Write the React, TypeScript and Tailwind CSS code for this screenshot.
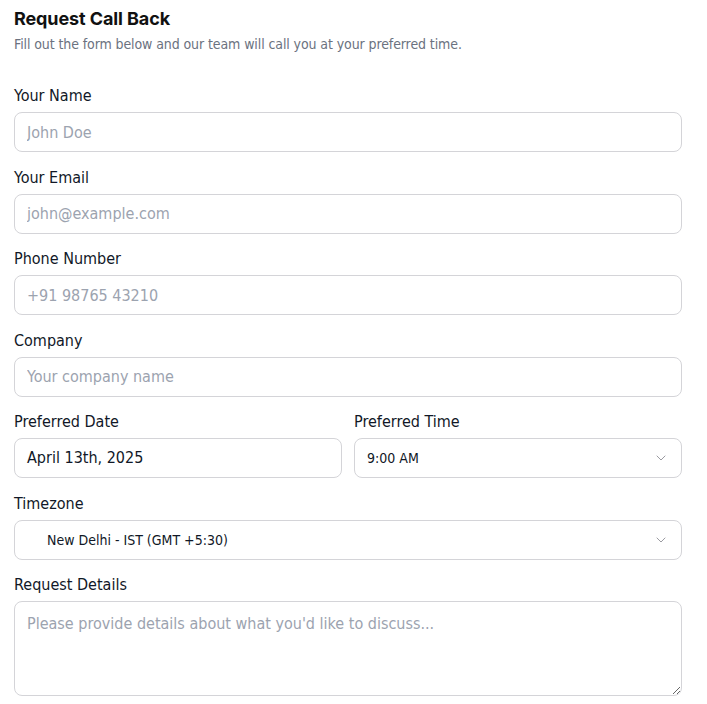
import { ChevronDown } from 'lucide-react'

const body = "font-['DejaVu_Sans_Condensed','DejaVu_Sans',sans-serif]"

function Field({ label, children }: { label: string; children: React.ReactNode }) {
  return (
    <div className="flex flex-col">
      <label className="text-base leading-6 text-[#111827] mb-1">{label}</label>
      {children}
    </div>
  )
}

function TextInput({ placeholder }: { placeholder: string }) {
  return (
    <input
      type="text"
      placeholder={placeholder}
      className="h-10 w-full rounded-lg border border-[#d4d4d8] bg-white px-3 text-base text-[#111827] placeholder:text-[#9ca3af] outline-none"
    />
  )
}

function SelectBox({ value, indent }: { value: string; indent?: boolean }) {
  return (
    <div className={`flex h-10 w-full items-center justify-between rounded-lg border border-[#d4d4d8] bg-white pr-3 ${indent ? 'pl-8' : 'pl-3'}`}>
      <span className="text-sm text-[#111827]">{value}</span>
      <ChevronDown className="h-4 w-4 text-[#71717a] opacity-70" strokeWidth={1.5} />
    </div>
  )
}

export default function App() {
  return (
    <div className={`min-h-screen bg-white px-[14px] pt-[7px] ${body}`}>
      <div className="w-[668px]">
        <h2 className="text-lg leading-6 font-bold text-[#111] font-['Inter',sans-serif] tracking-[-0.1px]">Request Call Back</h2>
        <p className="mt-[3px] text-sm leading-5 text-[#6b7280] tracking-[-0.1px]">
          Fill out the form below and our team will call you at your preferred time.
        </p>

        <form className="mt-[30px] flex flex-col gap-[13.5px]">
          <Field label="Your Name">
            <TextInput placeholder="John Doe" />
          </Field>
          <Field label="Your Email">
            <TextInput placeholder="john@example.com" />
          </Field>
          <Field label="Phone Number">
            <TextInput placeholder="+91 98765 43210" />
          </Field>
          <Field label="Company">
            <TextInput placeholder="Your company name" />
          </Field>
          <div className="grid grid-cols-2 gap-3">
            <Field label="Preferred Date">
              <button type="button" className="flex h-10 w-full items-center rounded-lg border border-[#d4d4d8] bg-white px-3 text-left text-base text-[#111827]">
                April 13th, 2025
              </button>
            </Field>
            <Field label="Preferred Time">
              <SelectBox value="9:00 AM" />
            </Field>
          </div>
          <Field label="Timezone">
            <SelectBox value="New Delhi - IST (GMT +5:30)" indent />
          </Field>
          <Field label="Request Details">
            <textarea
              placeholder="Please provide details about what you'd like to discuss..."
              className="h-[95px] w-full rounded-lg border border-[#d4d4d8] bg-white px-3 pt-[10px] pb-2 text-base text-[#111827] placeholder:text-[#9ca3af] outline-none"
            />
          </Field>
        </form>
      </div>
    </div>
  )
}
